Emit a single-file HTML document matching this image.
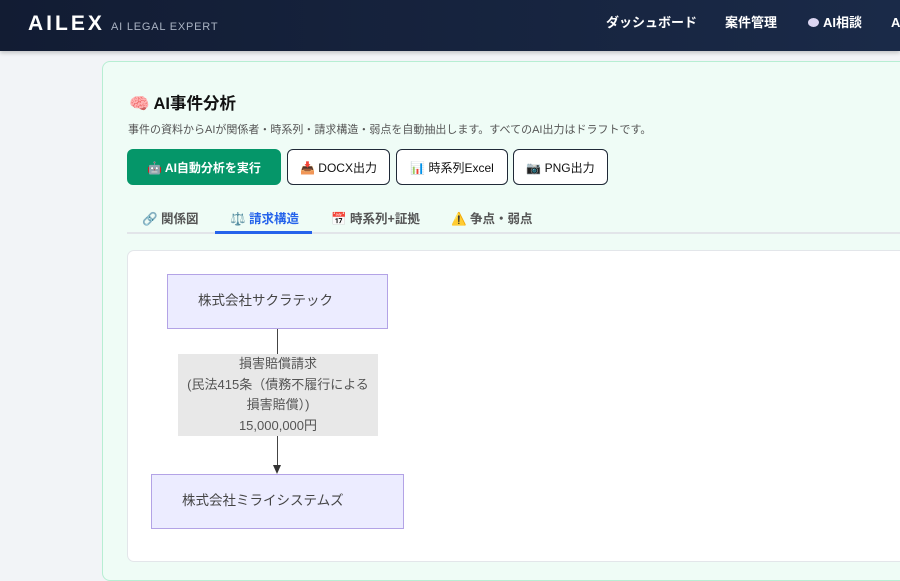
<!DOCTYPE html>
<html><head><meta charset="utf-8"><style>
*{box-sizing:border-box;margin:0;padding:0}
body{width:900px;height:570px;overflow:hidden;background:#f2f4f7;font-family:"Liberation Sans","Noto Sans CJK JP",sans-serif;position:relative}
.hdr{position:absolute;left:0;top:0;width:900px;height:51px;background:linear-gradient(90deg,#121c33,#1a2a48);box-shadow:0 2px 4px rgba(0,0,0,.2)}
.logo{position:absolute;left:28px;top:12px;color:#fff;font-weight:bold;font-size:21px;letter-spacing:3px}
.sub{position:absolute;left:111px;top:21px;color:#a9b2c2;font-size:11px;letter-spacing:.8px}
.nav{position:absolute;top:14px;color:#fff;font-size:13px;font-weight:bold;line-height:18px}
.panel{position:absolute;left:102px;top:61px;width:820px;height:520px;background:#effcf6;border:1px solid #b7eed3;border-radius:8px}
.t{position:absolute;left:129px;top:90px;font-size:16.5px;font-weight:bold;color:#111}
.d{position:absolute;left:128px;top:121px;font-size:11px;color:#555}
.b{position:absolute;top:149px;height:36px;border:1px solid #1f2937;border-radius:6px;background:#fff;font-size:12px;color:#111;display:flex;align-items:center;justify-content:center}
.tab{position:absolute;top:208px;font-size:12.5px;font-weight:bold;color:#555}
.card{position:absolute;left:127px;top:250px;width:790px;height:312px;background:#fff;border:1px solid #e3e6ea;border-radius:7px}
.n{position:absolute;background:#ececff;border:1.5px solid #b3a3e6;font-size:13.5px;color:#444;display:flex;align-items:center;padding-bottom:5px}
</style></head><body>
<div class="hdr"><div class="logo">AILEX</div><div class="sub">AI LEGAL EXPERT</div>
<div class="nav" style="left:606px">ダッシュボード</div>
<div class="nav" style="left:725px">案件管理</div>
<div class="nav" style="left:808px"><span style="display:inline-block;width:11px;height:9px;background:#dcd6f2;border-radius:50%;margin-right:4px"></span>AI相談</div>
<div class="nav" style="left:891px">A</div></div>
<div class="panel"></div>
<div class="t"><span style="color:#ec6fa6">🧠</span> AI事件分析</div>
<div class="d">事件の資料からAIが関係者・時系列・請求構造・弱点を自動抽出します。すべてのAI出力はドラフトです。</div>
<div class="b" style="left:127px;width:154px;background:#059669;border-color:#059669;color:#fff;font-weight:bold">🤖 AI自動分析を実行</div>
<div class="b" style="left:287px;width:103px">📥 DOCX出力</div>
<div class="b" style="left:396px;width:112px">📊 時系列Excel</div>
<div class="b" style="left:513px;width:95px">📷 PNG出力</div>
<div class="tab" style="left:142px">🔗 関係図</div>
<div class="tab" style="left:230px;color:#2563eb">⚖️ 請求構造</div>
<div class="tab" style="left:331px">📅 時系列+証拠</div>
<div class="tab" style="left:451px">⚠️ 争点・弱点</div>
<div style="position:absolute;left:127px;top:232px;width:780px;height:2px;background:#e2e5e9"></div>
<div style="position:absolute;left:215px;top:231px;width:97px;height:3px;background:#2563eb"></div>
<div class="card"></div>
<div class="n" style="left:167px;top:274px;width:221px;height:55px;padding-left:30px">株式会社サクラテック</div>
<div style="position:absolute;left:277px;top:329px;width:1px;height:140px;background:#444"></div>
<div style="position:absolute;left:273px;top:465px;width:0;height:0;border-left:4px solid transparent;border-right:4px solid transparent;border-top:9px solid #333"></div>
<div style="position:absolute;left:178px;top:354px;width:200px;height:82px;background:#e8e8e8;font-size:13px;color:#555;text-align:center;line-height:20.5px">損害賠償請求<br>(民法415条（債務不履行による<br>損害賠償）)<br>15,000,000円</div>
<div class="n" style="left:151px;top:474px;width:253px;height:55px;padding-left:30px">株式会社ミライシステムズ</div>
</body></html>
